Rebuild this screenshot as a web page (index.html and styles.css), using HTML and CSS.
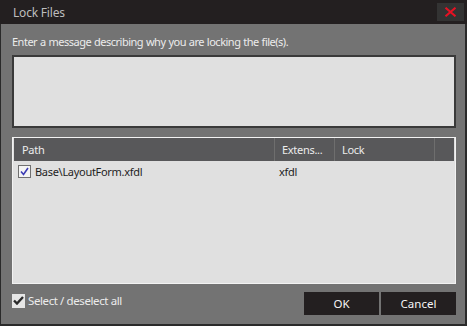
FILE: index.html
```html
<!DOCTYPE html>
<html lang="en">
<head>
  <meta charset="UTF-8" />
  <title>Lock Files</title>
  <link rel="stylesheet" href="styles.css">
</head>
<body>
  <div class="window">
    <div class="titlebar">
      <span class="title">Lock Files</span>
      <button class="close" aria-label="Close">
        <svg width="13" height="10" viewBox="0 0 13 10">
          <path d="M1.5 0.7L11.5 9.3M11.5 0.7L1.5 9.3" stroke="#e81123" stroke-width="2"/>
        </svg>
      </button>
    </div>

    <div class="content">
      <label class="prompt" for="message">Enter a message describing why you are locking the file(s).</label>
      <textarea id="message" class="message"></textarea>

      <div class="grid">
        <div class="grid-head">
          <div class="col col-path">Path</div>
          <div class="col col-ext">Extens...</div>
          <div class="col col-lock">Lock</div>
          <div class="col col-fill"></div>
        </div>
        <div class="grid-row">
          <div class="col col-path">
            <span class="row-check">
              <svg width="9" height="9" viewBox="0 0 9 9">
                <path d="M1 4.5L3.5 7.5L8 1" fill="none" stroke="#3c3cb4" stroke-width="1.6"/>
              </svg>
            </span>
            <span class="file">Base\LayoutForm.xfdl</span>
          </div>
          <div class="col col-ext">xfdl</div>
          <div class="col col-lock"></div>
        </div>
      </div>

      <div class="footer">
        <label class="select-all">
          <span class="check">
            <svg width="11" height="9" viewBox="0 0 11 9">
              <path d="M1 4.5L4 7.5L10 1" fill="none" stroke="#2b2b2b" stroke-width="2.4"/>
            </svg>
          </span>
          Select / deselect all
        </label>
        <div class="buttons">
          <button class="btn">OK</button>
          <button class="btn">Cancel</button>
        </div>
      </div>
    </div>
  </div>
</body>
</html>
```

FILE: styles.css
```css
:root {
  --chrome: #231f20;
  --body: #737373;
  --field: #e0e0e0;
  --head: #58585a;
  --text-light: #ececec;
  --text-dark: #1e1e1e;
}

* {
  box-sizing: border-box;
  margin: 0;
  padding: 0;
}

body {
  font-family: "Noto Sans", "Open Sans", sans-serif;
  font-size: 11px;
  letter-spacing: -0.3px;
  background: var(--chrome);
  width: 467px;
  height: 326px;
  overflow: hidden;
}

.window {
  height: 326px;
  display: flex;
  flex-direction: column;
  padding: 0 2px 2px 1px;
  background: #2a2a2a;
}

.titlebar {
  height: 24px;
  margin: 0 -2px 0 -1px;
  background: var(--chrome);
  display: flex;
  align-items: center;
  justify-content: space-between;
  padding: 0 3px 0 13px;
}

.title {
  color: #bdbdbd;
  font-size: 12px;
  letter-spacing: -0.2px;
}

.close {
  width: 27px;
  height: 18px;
  border: none;
  background: #333333;
  display: flex;
  align-items: center;
  justify-content: center;
}

.content {
  flex: 1;
  background: var(--body);
  padding: 9px 9px 0 11px;
  display: flex;
  flex-direction: column;
}

.prompt {
  color: var(--text-light);
  line-height: 18px;
  height: 22px;
  letter-spacing: -0.5px;
  word-spacing: 0.5px;
}

.message {
  height: 73px;
  width: 100%;
  border: 2px solid #3a3a3a;
  background: var(--field);
  resize: none;
  outline: none;
}

.grid {
  margin-top: 9px;
  height: 147px;
  border: 1px solid #f2f2f2;
  background: var(--field);
  display: flex;
  flex-direction: column;
}

.grid-head {
  height: 24px;
  background: var(--head);
  border: 1px solid #e0e0e0;
  border-top: none;
  display: flex;
  color: var(--text-light);
}

.grid-head .col {
  border-right: 1px solid #6e6e6e;
  line-height: 23px;
}

.col-path {
  width: 261px;
  padding-left: 8px;
}

.col-ext {
  width: 60px;
  padding-left: 7px;
}

.col-lock {
  width: 100px;
  padding-left: 7px;
}

.col-fill {
  flex: 1;
  border-right: none !important;
}

.grid-row {
  display: flex;
  height: 19px;
  align-items: center;
  color: var(--text-dark);
}

.grid-row .col-path {
  padding-left: 5px;
  display: flex;
  align-items: center;
  gap: 4px;
}

.grid-row .col-ext {
  padding-left: 5px;
}

.row-check {
  width: 13px;
  height: 13px;
  border: 1px solid #707070;
  background: #f4f4f4;
  display: flex;
  align-items: center;
  justify-content: center;
}

.footer {
  margin-top: 8px;
  display: flex;
  justify-content: space-between;
  align-items: flex-start;
}

.select-all {
  display: flex;
  align-items: center;
  gap: 3px;
  color: var(--text-light);
  margin-top: 1px;
  font-size: 11.5px;
  letter-spacing: -0.4px;
}

.check {
  width: 13px;
  height: 14px;
  background: #e6e6e6;
  display: flex;
  align-items: center;
  justify-content: center;
}

.buttons {
  display: flex;
  gap: 2px;
}

.btn {
  width: 75px;
  height: 23px;
  border: none;
  background: var(--chrome);
  color: #f5f5f5;
  font-family: inherit;
  font-size: 11.5px;
}
```
